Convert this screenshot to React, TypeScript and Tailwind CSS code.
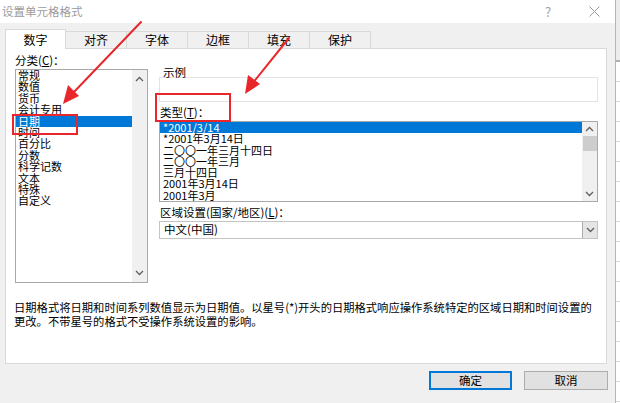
import React from 'react';

const categories = ['常规', '数值', '货币', '会计专用', '日期', '时间', '百分比', '分数', '科学记数', '文本', '特殊', '自定义'];
const types = ['*2001/3/14', '*2001年3月14日', '二〇〇一年三月十四日', '二〇〇一年三月', '三月十四日', '2001年3月14日', '2001年3月'];
const tabs = ['数字', '对齐', '字体', '边框', '填充', '保护'];

const font = { fontFamily: '"Noto Sans CJK SC", "Noto Sans", sans-serif' };

const ChevronUp = () => (
  <svg width="9" height="6" viewBox="0 0 9 6" className="text-[#606060]">
    <path d="M1 5 L4.5 1.5 L8 5" fill="none" stroke="currentColor" strokeWidth="1.3" />
  </svg>
);

const ChevronDown = () => (
  <svg width="9" height="6" viewBox="0 0 9 6" className="text-[#606060]">
    <path d="M1 1 L4.5 4.5 L8 1" fill="none" stroke="currentColor" strokeWidth="1.3" />
  </svg>
);

const App = () => {
  return (
    <div className="relative w-[620px] h-[403px] overflow-hidden flex bg-white text-black" style={font}>
      {/* dialog */}
      <div className="w-[616px] h-[403px] flex flex-col bg-[#f0f0f0] border-r border-[#b5b5b5]">
        {/* title bar */}
        <div className="h-[23px] bg-white flex items-center pl-[2px] shrink-0">
          <span className="text-[11.5px] text-[#9b9b9b] leading-none">设置单元格格式</span>
          <span className="ml-auto text-[13px] text-[#a0a0a0] leading-none w-[10px] mr-[34px]">?</span>
          <svg width="11" height="11" viewBox="0 0 11 11" className="mr-[15px]">
            <path d="M0.5 0.5 L10.5 10.5 M10.5 0.5 L0.5 10.5" stroke="#9a9a9a" strokeWidth="1" />
          </svg>
        </div>

        {/* tabs */}
        <div className="flex pl-[5px] pt-[6px] h-[25px] shrink-0 items-end">
          {tabs.map((t, i) =>
            i === 0 ? (
              <div key={t} className="w-[61px] h-[20px] bg-white border border-b-0 border-[#d9d9d9] flex items-center justify-center text-[12px] leading-none relative z-10 -mb-px">
                {t}
              </div>
            ) : (
              <div key={t} className="w-[61px] h-[17px] bg-[#f0f0f0] border border-l-0 border-b-0 border-[#d9d9d9] flex items-center justify-center text-[12px] leading-none">
                {t}
              </div>
            )
          )}
        </div>

        {/* panel */}
        <div className="ml-[5px] w-[602px] h-[316px] bg-white border border-[#d9d9d9] shrink-0 flex flex-col">
          <div className="flex">
            {/* left column */}
            <div className="pl-[9px] pt-[4px] w-[143px] shrink-0">
              <div className="text-[11.5px] leading-[14px] h-[14px]">分类(<span className="underline">C</span>)：</div>
              <div className="mt-[2px] w-[133px] h-[214px] border border-[#a9a9a9] flex">
                <div className="flex-1 flex flex-col">
                  {categories.map((c) => (
                    <div
                      key={c}
                      className={`h-[11.4px] leading-[11.4px] text-[11px] pl-[2px] whitespace-nowrap ${c === '日期' ? 'bg-[#0078d7] text-white' : ''}`}
                    >
                      {c}
                    </div>
                  ))}
                </div>
                <div className="w-[15px] bg-[#f0f0f0] flex flex-col items-center justify-between pt-[6px] pb-[6px]">
                  <ChevronUp />
                  <ChevronDown />
                </div>
              </div>
            </div>

            {/* right column */}
            <div className="ml-[10px] w-[439px] pt-[16px]">
              <div className="text-[11.5px] leading-[14px] h-[14px] pl-[4px]">示例</div>
              <div className="h-[25px] border border-[#e3e3e3] -mt-[2px]" />
              <div className="mt-[3px] text-[11.5px] leading-[14px] h-[14px] pl-[1px]">类型(<span className="underline">T</span>)：</div>
              <div className="mt-[2px] h-[81px] border border-[#a9a9a9] flex">
                <div className="flex-1 flex flex-col">
                  {types.map((t, i) => (
                    <div
                      key={t}
                      className={`h-[11.3px] leading-[11.3px] text-[11px] pl-[3px] whitespace-nowrap ${i === 0 ? 'bg-[#0078d7] text-white' : ''}`}
                    >
                      {t}
                    </div>
                  ))}
                </div>
                <div className="w-[15px] bg-[#f0f0f0] flex flex-col items-center pt-[4px] pb-[4px]">
                  <ChevronUp />
                  <div className="w-[14px] h-[15px] bg-[#cdcdcd] mt-[4px]" />
                  <div className="mt-auto">
                    <ChevronDown />
                  </div>
                </div>
              </div>
              <div className="mt-[3px] text-[11.5px] leading-[14px] h-[14px] pl-[1px]">区域设置(国家/地区)(<span className="underline">L</span>)：</div>
              <div className="mt-[2px] h-[18px] border border-[#c4c4c4] flex items-center">
                <span className="flex-1 pl-[4px] text-[11.5px] leading-none">中文(中国)</span>
                <div className="w-[15px] h-[16px] bg-[#e5e5e5] border-l border-[#adadad] flex items-center justify-center">
                  <ChevronDown />
                </div>
              </div>
            </div>
          </div>

          {/* description */}
          <div className="mt-[17px] pl-[8px] text-[11.3px] leading-[14px] whitespace-nowrap">
            <div>日期格式将日期和时间系列数值显示为日期值。以星号(*)开头的日期格式响应操作系统特定的区域日期和时间设置的</div>
            <div>更改。不带星号的格式不受操作系统设置的影响。</div>
          </div>
        </div>

        {/* buttons */}
        <div className="flex justify-end gap-[12px] pr-[7px] mt-[7px]">
          <button className="w-[83px] h-[19px] bg-[#e1e1e1] border-2 border-[#0078d7] text-[11.5px] leading-none flex items-center justify-center">
            确定
          </button>
          <button className="w-[84px] h-[19px] bg-[#e1e1e1] border border-[#adadad] text-[11.5px] leading-none flex items-center justify-center">
            取消
          </button>
        </div>
      </div>

      {/* spreadsheet strip behind dialog */}
      <div className="flex-1 flex flex-col bg-white">
        <div className="h-[62px] bg-[#ececec] border-b-2 border-[#b0b0b0]" />
        {Array.from({ length: 17 }).map((_, i) => (
          <div key={i} className="h-[20px] border-b border-[#d6d6d6]" />
        ))}
      </div>

      {/* red annotations */}
      <div className="absolute left-[12px] top-[114px] w-[66px] h-[21px] border-2 border-[#e8262b]" />
      <div className="absolute left-[155px] top-[93px] w-[76px] h-[29px] border-2 border-[#e8262b]" />
      <svg className="absolute left-0 top-0" width="620" height="403" viewBox="0 0 620 403">
        <path d="M141 22 L73 93" stroke="#e8262b" strokeWidth="2" strokeLinecap="round" />
        <path d="M63 104 L68 85 L79 96 Z" fill="#e8262b" />
        <path d="M289 38 L252 84" stroke="#e8262b" strokeWidth="2" strokeLinecap="round" />
        <path d="M245 94 L248 75 L260 84 Z" fill="#e8262b" />
      </svg>
    </div>
  );
};

export default App;
